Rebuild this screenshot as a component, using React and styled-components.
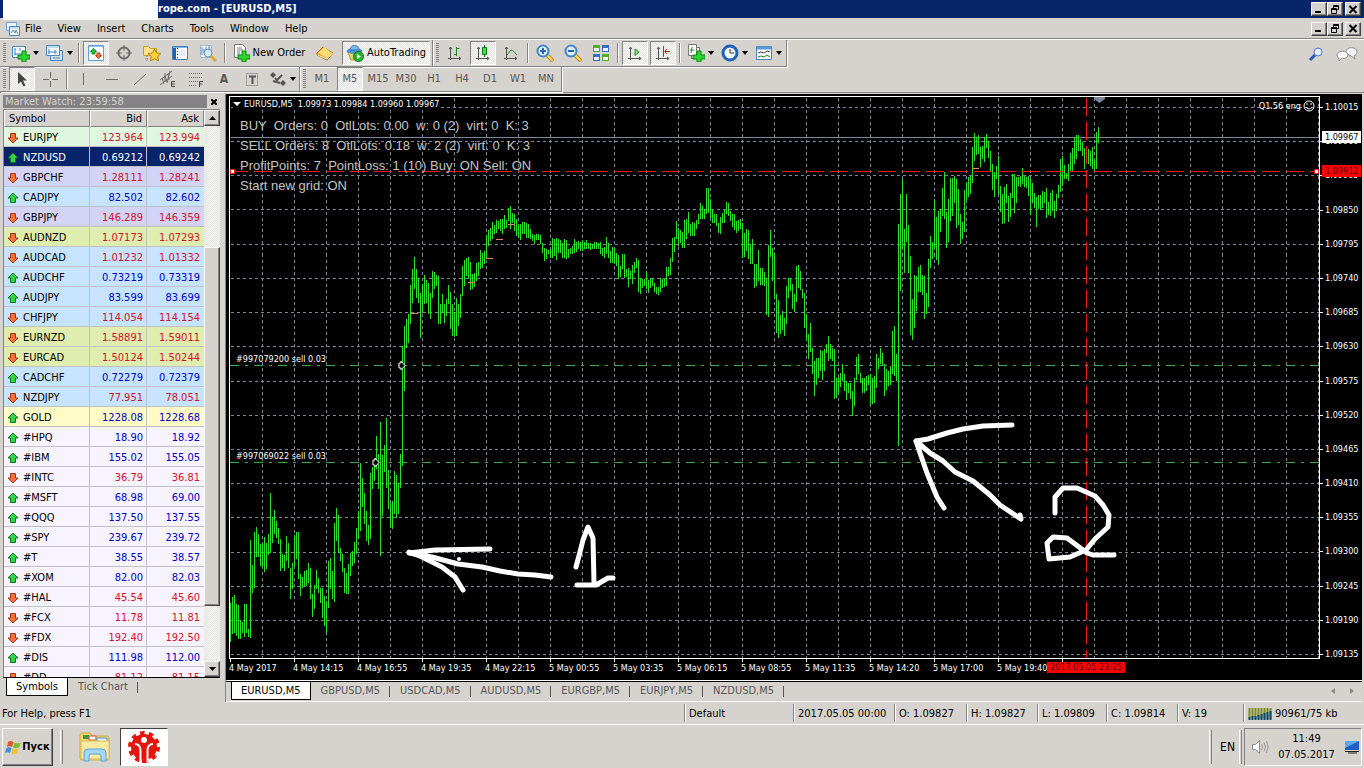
import React, { useState } from "react";
import styled, { createGlobalStyle, css } from "styled-components";

const UI_FONT = `Tahoma, "DejaVu Sans Condensed", "DejaVu Sans", sans-serif`;

const quotes = [
  ["EURJPY", "123.964", "123.994", "down", "#def7de"],
  ["NZDUSD", "0.69212", "0.69242", "up", "#08246b"],
  ["GBPCHF", "1.28111", "1.28241", "down", "#d3d3f5"],
  ["CADJPY", "82.502", "82.602", "up", "#c6e3ff"],
  ["GBPJPY", "146.289", "146.359", "down", "#d3d3f5"],
  ["AUDNZD", "1.07173", "1.07293", "down", "#dfedae"],
  ["AUDCAD", "1.01232", "1.01332", "down", "#c6e3ff"],
  ["AUDCHF", "0.73219", "0.73319", "up", "#c6e3ff"],
  ["AUDJPY", "83.599", "83.699", "up", "#c6e3ff"],
  ["CHFJPY", "114.054", "114.154", "down", "#c6e3ff"],
  ["EURNZD", "1.58891", "1.59011", "down", "#dfedae"],
  ["EURCAD", "1.50124", "1.50244", "down", "#dfedae"],
  ["CADCHF", "0.72279", "0.72379", "up", "#c6e3ff"],
  ["NZDJPY", "77.951", "78.051", "down", "#c6e3ff"],
  ["GOLD", "1228.08", "1228.68", "up", "#fffbc6"],
  ["#HPQ", "18.90", "18.92", "up"],
  ["#IBM", "155.02", "155.05", "up"],
  ["#INTC", "36.79", "36.81", "down"],
  ["#MSFT", "68.98", "69.00", "up"],
  ["#QQQ", "137.50", "137.55", "up"],
  ["#SPY", "239.67", "239.72", "up"],
  ["#T", "38.55", "38.57", "up"],
  ["#XOM", "82.00", "82.03", "up"],
  ["#HAL", "45.54", "45.60", "down"],
  ["#FCX", "11.78", "11.81", "down"],
  ["#FDX", "192.40", "192.50", "down"],
  ["#DIS", "111.98", "112.00", "up"],
  ["#DD", "81.12", "81.15", "down"],
];

const prices = [
  "1.10015", "1.09960", "1.09905", "1.09850", "1.09795", "1.09740",
  "1.09685", "1.09630", "1.09575", "1.09520", "1.09465", "1.09410",
  "1.09355", "1.09300", "1.09245", "1.09190", "1.09135",
];

const times = [
  "4 May 2017", "4 May 14:15", "4 May 16:55", "4 May 19:35", "4 May 22:15",
  "5 May 00:55", "5 May 03:35", "5 May 06:15", "5 May 08:55", "5 May 11:35",
  "5 May 14:20", "5 May 17:00", "5 May 19:40",
];

const gridRows = [
  107, 141, 175, 209, 244, 278, 312, 346, 381, 415, 449, 483, 517, 552, 586,
  620, 654,
];
const gridCols = Array.from({ length: 34 }, (_, i) => 262 + i * 32);

// high-low of every bar, 2px apart
const bars = `
602-641 596-633 594-632 603-635 604-638 619-638 621-632 603-636 603-632 628-636
539-637 564-592 531-587 526-556 533-556 543-565 542-566 536-571 542-568 533-554
492-552 516-542 509-533 520-537 527-543 538-570 553-567 554-570 535-560 542-567
567-598 562-588 534-565 531-558 531-578 573-595 576-587 570-585 569-585 562-582
567-598 593-616 584-608 569-588 577-592 587-602 587-617 595-625 600-632 560-607
557-588 570-598 522-601 507-540 514-552 547-560 553-571 567-592 572-593 563-593
552-575 550-565 541-562 527-553 510-538 462-530 477-506 492-523 510-540 524-544
472-538 466-488 465-480 435-468 453-488 421-555 454-515 444-471 417-487 469-508
502-527 500-528 470-513 474-517 482-513 453-487 345-465 325-390 318-347 313-342
284-323 268-302 256-288 268-297 277-302 292-337 283-312 274-303 279-302 282-313
292-318 270-297 271-288 274-285 275-323 303-323 293-312 303-322 298-315 284-303
291-328 303-335 312-336 297-335 303-325 293-317 265-295 259-285 257-275 256-278
261-289 273-288 272-286 262-280 261-275 249-268 252-267 250-263 234-258 229-245
227-240 221-238 224-233 219-232 220-228 218-230 218-233 214-228 219-227 207-220
205-228 212-222 213-230 218-235 223-237 223-239 221-233 221-233 222-237 223-237
228-238 233-240 234-243 233-239 233-239 234-243 242-252 247-260 248-258 249-253
248-257 237-257 238-255 237-259 238-252 239-252 242-257 238-257 239-258 248-257
247-253 245-253 238-252 241-251 240-248 241-250 239-250 241-248 239-248 242-248
242-249 243-248 241-248 241-248 242-248 241-253 247-255 246-257 236-253 242-257
250-262 246-262 247-263 252-265 254-278 265-276 253-268 253-277 268-276 267-286
270-278 264-283 261-272 257-267 259-291 277-293 278-287 278-285 270-288 279-292
277-287 277-285 282-291 286-293 286-294 277-291 278-287 278-286 266-285 266-275
257-274 237-261 236-251 220-238 227-245 229-242 231-247 219-247 218-238 211-232
223-235 221-235 222-235 219-228 213-223 202-218 205-218 208-218 187-213 187-212
198-217 209-222 213-222 213-225 222-232 216-233 212-222 209-222 201-213 202-215
210-220 213-226 213-229 220-232 219-230 218-228 222-257 232-256 228-250 229-258
243-263 238-263 263-287 263-285 249-280 267-284 267-284 271-285 277-314 244-316
229-256 247-280 252-297 293-332 299-337 314-333 310-329 317-335 285-323 277-297
277-290 283-308 293-311 265-301 264-287 270-289 288-297 292-327 313-340 333-358
322-351 347-373 360-395 357-384 357-377 349-370 350-379 348-370 343-352 335-360
343-358 347-360 348-398 377-397 376-392 372-386 363-380 373-390 380-399 382-392
382-398 390-415 377-405 356-379 353-373 372-382 377-392 377-392 375-390 374-384
373-404 377-403 375-402 353-387 357-368 347-363 352-365 363-395 368-389 370-385
365-384 330-373 325-375 353-380 223-445 193-290 178-248 228-272 193-241 224-272
255-334 298-339 274-327 275-310 266-291 264-291 274-294 275-318 292-313 258-306
235-267 241-258 198-248 216-259 210-264 208-231 187-215 171-218 211-247 198-241
177-220 177-215 175-202 178-227 188-224 213-243 221-238 189-231 181-200 176-196
175-193 146-182 132-160 136-154 134-153 146-166 145-158 136-161 133-147 140-157
150-170 163-189 171-196 165-178 155-193 185-211 193-223 186-222 183-202 195-221
192-216 173-197 173-212 176-202 176-185 175-186 167-183 175-186 176-187 175-195
178-214 182-202 192-207 196-226 194-208 194-209 190-207 191-202 187-217 201-214
192-215 189-210 200-217 193-210 184-197 158-191 155-185 164-178 172-178 163-180
152-170 147-171 136-163 134-158 134-150 138-150 141-155 147-168 145-162 148-163
150-165 146-168 158-170 131-168 126-142`;

const barPath = bars
  .trim()
  .split(/\s+/)
  .map((bar, i) => {
    const [high, low] = bar.split("-");
    return `M${230 + i * 2} ${high}V${low}`;
  })
  .join("");

const chartTabs = [
  "EURUSD,M5", "GBPUSD,M5", "USDCAD,M5", "AUDUSD,M5", "EURGBP,M5",
  "EURJPY,M5", "NZDUSD,M5",
];

const periods = ["M1", "M5", "M15", "M30", "H1", "H4", "D1", "W1", "MN"];

/////// icons

const Svg = ({ w = 18, h = 18, children }) => (
  <svg width={w} height={h} viewBox={`0 0 ${w} ${h}`} fill="none" aria-hidden="true">
    {children}
  </svg>
);

const Plus = () => (
  <path d="M10 7h4v4h4v4h-4v3h-4v-3H6v-4h4z" fill="#2fd42f" stroke="#078a0b" />
);

const NewChartIcon = () => (
  <Svg>
    <path d="M.5 2.500h13v11H.5z" fill="#f4faff" stroke="#4a86b8" />
    <path d="M3 5v6M2 5h2M2 10h8M8 4v3" stroke="#4a86b8" />
    <Plus />
  </Svg>
);
const ProfilesIcon = () => (
  <Svg>
    <path d="M4.500 6.500h12v10h-12z" fill="#cfe2f3" stroke="#4a86b8" />
    <path d="M.5 1.500h13v10H.5z" fill="#f4faff" stroke="#4a86b8" />
    <path d="M1 3h12" stroke="#8fbfe6" />
    <path d="M3 5v5M2 8h9M9 6v4M7 14h7" stroke="#4a86b8" />
  </Svg>
);
const WatchIcon = () => (
  <Svg>
    <path d="M1.500 1.500h15v15h-15z" fill="#fff" stroke="#5aa0d8" />
    <path d="M2 2.500h14" stroke="#8fc4ec" />
    <path d="M3.500 7.500 6.500 4.500 9.500 7.500H8V10H5V7.500z" fill="#35c045" stroke="#128a1c" />
    <path d="M8.500 11.500 11.500 14.500l3-3h-1.500V9h-3v2.500z" fill="#f08040" stroke="#b03010" />
  </Svg>
);
const TargetIcon = () => (
  <Svg>
    <circle cx="9" cy="9" r="5.500" stroke="#6b6b6b" strokeWidth="2" />
    <path d="M9 1v6M9 11v6M1 9h6M11 9h6" stroke="#6b6b6b" />
  </Svg>
);
const FavIcon = () => (
  <Svg>
    <path d="M.5 2.500h5l2 2h6v7H.5z" fill="#ffe28a" stroke="#c99b2a" />
    <path d="M4 12v5M2 15h4" stroke="#9a7a30" strokeDasharray="1 1" />
    <path d="m11.500 5 2 4 4.500.5-3.300 3 .9 4.500-4.100-2.200L7.400 17l.9-4.500-3.300-3L9.500 9z" fill="#ffd23c" stroke="#b98509" />
  </Svg>
);
const NavIcon = () => (
  <Svg>
    <path d="M1.500 2.500h15v13h-15z" fill="#fff" stroke="#3a7cc0" />
    <path d="M2 3.500h14" stroke="#7fb4e4" />
    <path d="M3.500 4v11" stroke="#2a5fa8" strokeWidth="3" />
    <path d="M6.500 4v11" stroke="#222" strokeDasharray="1 2" />
    <path d="M8 7h7M8 9h7M8 11h7" stroke="#c8dff5" />
  </Svg>
);
const TesterIcon = () => (
  <Svg>
    <path d="M1.500 1.500h11v12h-11z" fill="#fff" stroke="#9bb5cc" />
    <path d="M3 3v8M5 5v4M7 3v5M10 2v5" stroke="#3d7ab8" />
    <circle cx="9" cy="9" r="4" fill="#cfe6fa" fillOpacity=".8" stroke="#5d93c4" />
    <path d="m12 12 5 5" stroke="#e0a92c" strokeWidth="3" />
  </Svg>
);
const OrderIcon = () => (
  <Svg>
    <path d="M2.500.5h8l3 3v10h-11z" fill="#fff" stroke="#777" />
    <path d="M5 4h5M5 6h6M5 8h3M5 10h3" stroke="#777" />
    <Plus />
  </Svg>
);
const BookIcon = () => (
  <Svg>
    <path d="M1 9 7 3l10 6-6 7L1 11z" fill="#e8a32c" stroke="#a86f10" />
    <path d="m2 9 6-6 8 6-5 5z" fill="#ffdb74" />
    <path d="m1.500 11 9.500 4 5.500-6" stroke="#fff3cf" />
  </Svg>
);
const ExpertIcon = () => (
  <Svg>
    <path d="M2 8h13l-3 8H5z" fill="#f0d060" stroke="#b9962c" />
    <ellipse cx="8.500" cy="7" rx="8" ry="3" fill="#4a90d0" />
    <path d="M4 6c0-6 9-6 9 0z" fill="#79b9ec" stroke="#3d7ab8" />
    <circle cx="12.500" cy="12.500" r="5" fill="#27b32b" stroke="#0c7a12" />
    <path d="m11 10 4 2.500-4 2.500z" fill="#fff" />
  </Svg>
);
const Axes = () => (
  <path d="M4.500 3v13M2 14.500h13M3 5l1.500-2L6 5M13 13l2 1.500-2 1.500" stroke="#555" />
);
const BarsIcon = () => (
  <Svg><Axes /><path d="M10.500 3v9M8 10.500h2M10.500 4.500h3" stroke="#178a1e" /></Svg>
);
const CandleIcon = () => (
  <Svg>
    <Axes />
    <path d="M10.500 1v12" stroke="#0a7a10" />
    <path d="M8.500 3.500h4v7h-4z" fill="#3fe048" stroke="#0a7a10" />
  </Svg>
);
const LineIcon = () => (
  <Svg><Axes /><path d="m5 11 4-5c2 0 3 2 6 5" stroke="#178a1e" /></Svg>
);
const Magnifier = ({ plus }) => (
  <Svg>
    <path d="m11 11 6 6" stroke="#b58a20" strokeWidth="4" />
    <path d="m11 11 5.500 5.500" stroke="#ffd75c" strokeWidth="2" />
    <circle cx="7" cy="7" r="5.500" fill="#dff1ff" stroke="#3f86c8" strokeWidth="2" />
    <path d={plus ? "M4 7h6M7 4v6" : "M4 7h6"} stroke="#2468b0" strokeWidth="2" />
  </Svg>
);
const TileIcon = () => (
  <Svg>
    <path d="M1 1h7v7H1zM10 10h7v7h-7z" fill="#5aa82c" />
    <path d="M10 1h7v7h-7zM1 10h7v7H1z" fill="#2f6fc8" />
    <path d="M2 4h5v3H2zM11 4h5v3h-5zM2 13h5v3H2zM11 13h5v3h-5z" fill="#f2f8ff" />
  </Svg>
);
const ScrollIcon = () => (
  <Svg><Axes /><path d="m9 5 4 3-4 3.500z" fill="#8fe394" stroke="#178a1e" /></Svg>
);
const ShiftIcon = () => (
  <Svg><Axes /><path d="M9.500 2v11" stroke="#555" /><path d="M16 7.500h-5M13 5l-2.500 2.500L13 10" stroke="#b0281c" /></Svg>
);
const IndicatorIcon = () => (
  <Svg>
    <path d="M4.500 3.500h8v11h-8z" fill="#fff" stroke="#777" />
    <path d="M1.500.5h8v11h-8z" fill="#fff" stroke="#777" />
    <path d="M6 3c-2 0-1 3-2 6M3 6h4" stroke="#178a1e" />
    <Plus />
  </Svg>
);
const ClockIcon = () => (
  <Svg>
    <circle cx="9" cy="9" r="7" fill="#eef6ff" stroke="#1e62b8" strokeWidth="3" />
    <path d="M9 5v4h4" stroke="#333" />
  </Svg>
);
const TemplateIcon = () => (
  <Svg>
    <path d="M1.500 2.500h15v13h-15z" fill="#fff" stroke="#4a86b8" />
    <path d="M2 4h14" stroke="#5a9ad8" strokeWidth="3" />
    <path d="m3 9 3-1 3 1 3-2 3 1" stroke="#444" />
    <path d="m3 13 3-1 3 1 3-2 3 2" stroke="#178a1e" />
  </Svg>
);
const CursorIcon = () => (
  <Svg><path d="M5 2v12l3-2.500 2.500 5 2-1-2.500-5h4z" fill="#444" /></Svg>
);
const stroke = "#6b6b6b";
const CrossIcon = () => (
  <Svg><path d="M9.500 2v6M9.500 11v6M2 9.500h6M11 9.500h6" stroke={stroke} /></Svg>
);
const VLineIcon = () => <Svg><path d="M8.500 3v12" stroke={stroke} /></Svg>;
const HLineIcon = () => <Svg><path d="M3 9.500h12" stroke={stroke} /></Svg>;
const TrendIcon = () => <Svg><path d="M3 15 15 4" stroke={stroke} /></Svg>;
const ChannelIcon = () => (
  <Svg>
    <path d="M1 10 13 1M1 15 13 6M3 8l2 6M6 6l2 6M9 4l1 6M6 3v9M11 1l-3 12" stroke={stroke} />
    <path d="M16 11.500h-3.500v5H16M13 14h3" stroke="#444" />
  </Svg>
);
const FiboIcon = () => (
  <Svg>
    <path d="M2 3.500h13M2 7.500h13M2 11.500h9M2 15.500h8" stroke={stroke} strokeDasharray="1 1" />
    <path d="M12.500 17v-5.500H16M12 14h3.500" stroke="#444" />
  </Svg>
);
const LabelIcon = () => (
  <Svg>
    <path d="M3.500 3.500h11v12h-11z" stroke={stroke} strokeDasharray="1 1" />
    <path d="M6 6.500h7M9.500 6v8" stroke="#555" strokeWidth="2" />
  </Svg>
);
const ArrowsIcon = () => (
  <Svg>
    <path d="m1 5 3-3 3 3-3 3zM11 13l3-3 3 3-3 3z" fill="#555" />
    <path d="m6 8 2 2 5-5M4 11l7 2" stroke="#555" strokeWidth="2" />
  </Svg>
);
const Caret = () => (
  <svg width="6" height="4" viewBox="0 0 6 4" aria-hidden="true"><path d="M0 0h6L3 4z" fill="#000" /></svg>
);
const Arrow = ({ dir }) => (
  <svg width="12" height="12" viewBox="0 0 12 12" aria-hidden="true">
    {dir === "up" ? (
      <path d="M6 1 11 6H8.500v4.500h-5V6H1z" fill="#35d148" stroke="#0b7a1c" />
    ) : (
      <path d="M6 11 1 6h2.500V1.500h5V6H11z" fill="#f4713c" stroke="#a8330c" />
    )}
  </svg>
);
const GlyphMin = () => <Svg w={10} h={9}><path d="M1 7h6" stroke="#000" strokeWidth="2" /></Svg>;
const GlyphRestore = () => (
  <Svg w={10} h={9}>
    <path d="M3.500 3V.5h5v4H7M3 1.500h6M1.500 3.500h5v5h-5zM1 4.500h6" stroke="#000" />
  </Svg>
);
const GlyphClose = () => (
  <Svg w={10} h={9}><path d="m1.500 1 7 7m0-7-7 7" stroke="#000" strokeWidth="2" /></Svg>
);

/////// parts

const Tool = ({ label, w, pressed, menu, children }) => (
  <ToolButton type="button" title={label} aria-label={label} aria-pressed={!!pressed} $w={w} $pressed={pressed}>
    {children}
    {menu && <Caret />}
  </ToolButton>
);

const WindowControls = ({ name }) => (
  <Controls>
    <WinButton type="button" aria-label={`Minimize ${name}`}><GlyphMin /></WinButton>
    <WinButton type="button" aria-label={`Restore ${name}`}><GlyphRestore /></WinButton>
    <WinButton type="button" aria-label={`Close ${name}`} $gap><GlyphClose /></WinButton>
  </Controls>
);

const MarketWatch = () => (
  <Watch>
    <WatchHead>
      <WatchTitle>Market Watch: 23:59:58</WatchTitle>
      <WatchClose type="button" aria-label="Close Market Watch">
        <svg width="6" height="6" viewBox="0 0 6 6"><path d="m0 0 6 6m0-6L0 6" stroke="#000" strokeWidth="2" /></svg>
      </WatchClose>
    </WatchHead>
    <WatchBody>
      <TableBox>
        <Table>
          <thead>
            <tr>
              <Th>Symbol</Th>
              <Th $num>Bid</Th>
              <Th $num>Ask</Th>
            </tr>
          </thead>
          <tbody>
            {quotes.map(([name, bid, ask, dir, bg]) => (
              <Row key={name} $bg={bg} $dir={dir} $selected={name === "NZDUSD"}>
                <td><SymbolCell><Arrow dir={dir} />{name}</SymbolCell></td>
                <td>{bid}</td>
                <td>{ask}</td>
              </Row>
            ))}
          </tbody>
        </Table>
      </TableBox>
      <ScrollBar>
        <ScrollButton type="button" aria-label="Scroll up">
          <svg width="7" height="4" viewBox="0 0 7 4"><path d="M0 4h7L3.500 0z" /></svg>
        </ScrollButton>
        <Track $grow={121} />
        <Thumb />
        <Track $grow={55} />
        <ScrollButton type="button" aria-label="Scroll down">
          <svg width="7" height="4" viewBox="0 0 7 4"><path d="M0 0h7L3.500 4z" /></svg>
        </ScrollButton>
      </ScrollBar>
    </WatchBody>
    <WatchTabs>
      <Tab type="button" $active>Symbols</Tab>
      <Tab type="button">Tick Chart</Tab>
    </WatchTabs>
  </Watch>
);

const PlotDrawing = () => (
  <PlotSvg viewBox="230 97 1089 561" preserveAspectRatio="none" role="img" aria-label="EURUSD M5 price chart">
    <g shapeRendering="crispEdges" fill="none" transform="translate(0.5 0.5)">
      <g stroke="#778899" strokeDasharray="3 3">
        {gridRows.map((y) => <path key={y} d={`M230 ${y}H1319`} />)}
        {gridCols.map((x) => <path key={x} d={`M${x} 97V658`} />)}
      </g>
      <path d="M230 137H1319" stroke="#778899" />
      <path d={barPath} stroke="#2be02b" />
      <path d="M410 313h7M467 282h7M485 258h7M495 239h7M507 224h7M971 168h7" stroke="#e08868" />
      <path d="M1086 97V658" stroke="#f01818" strokeDasharray="18 6" />
    </g>
    <g fill="none">
      <path d="M230 365.500H1319M230 462.500H1319" stroke="#32b03c" strokeDasharray="9 6 3 6" />
      <path d="M230 171.500H1319" stroke="#ff1414" strokeDasharray="18 6" />
      <path d="M230.500 169.500h4v4h-4zM1314.500 169.500h4v4h-4z" fill="#fff" stroke="#f01818" />
    </g>
    <path d="M1094 97h11v2l-5.500 4-5.500-4z" fill="#778899" />
    <path d="M399 363h2v-2l4 4.500-4 4.500v-2h-2zM373 460h2v-2l4 4.500-4 4.500v-2h-2z" fill="#000" stroke="#fff" />
    <g fill="none" stroke="#fff" strokeWidth="5" strokeLinecap="round" strokeLinejoin="round">
      <path d="M490 549 435 550 409 553 432 557 458 564 482 567 500 571 518 574 535 575 551 577" />
      <path d="M409 552 422 557 442 567 455 577 463 590" />
      <path d="M459 559v0" strokeWidth="4" />
      <path d="M576 567 580 552 583 540 588 527 593 538 594 583M577 585H596L608 578 613 578" />
      <path d="M1012 425 983 426 963 429 947 433 928 439 916 441 930 453 943 461 955 472 973 481 990 495 1000 505 1021 519 1020 515" />
      <path d="M916 441 920 453 927 473 937 497 944 508" />
      <path d="M1055 513V497L1063 488 1077 488 1095 496 1103 505 1109 515 1108 527 1095 539 1086 550 1070 557 1049 559 1047 543 1053 537 1067 538 1087 553 1093 555H1114" />
    </g>
  </PlotSvg>
);

const Chart = () => (
  <ChartWindow>
    <Plot>
      <PlotDrawing />
      <ChartTitle>
        <svg width="8" height="4" viewBox="0 0 8 4"><path d="M0 0h8L4 4z" fill="#fff" /></svg>
        {"EURUSD,M5  1.09973 1.09984 1.09960 1.09967"}
      </ChartTitle>
      <ExpertName>
        Q1.56 eng
        <Svg w={12} h={12}>
          <circle cx="6" cy="6" r="5" stroke="#fff" />
          <path d="M4 3v2M8 3v2M3 7c1 2.500 5 2.500 6 0" stroke="#fff" />
        </Svg>
      </ExpertName>
      <Comment>
        {`BUY  Orders: 0  OtlLots: 0.00  w: 0 (2)  virt: 0  K: 3
SELL Orders: 8  OtlLots: 0.18  w: 2 (2)  virt: 0  K: 3
ProfitPoints: 7  PointLoss: 1 (10) Buy: ON Sell: ON
Start new grid: ON`}
      </Comment>
      <OrderLabel $top={257}>#997079200 sell 0.03</OrderLabel>
      <OrderLabel $top={354}>#997069022 sell 0.03</OrderLabel>
    </Plot>
    <PriceAxis>
      {prices.map((p) => <PriceLabel key={p}>{p}</PriceLabel>)}
      <PriceTag $top={35}>1.09967</PriceTag>
      <PriceTag $top={69} $red>1.09912</PriceTag>
    </PriceAxis>
    <TimeAxis>
      {times.map((t) => <TimeLabel key={t}>{t}</TimeLabel>)}
      <TimeLabel />
      <TimeTag>2017.05.05 23:25</TimeTag>
    </TimeAxis>
  </ChartWindow>
);

const App = () => {
  const [tab, setTab] = useState("EURUSD,M5");

  return (
    <Desktop>
      <GlobalStyle />
      <TitleBar>
        <TitlePatch />
        <Title>rope.com - [EURUSD,M5]</Title>
        <WindowControls name="terminal" />
      </TitleBar>
      <MenuBar>
        <Svg w={16} h={16}>
          <path d="M1.500 1.500h10v8h-10z" fill="#eef6ff" stroke="#6d9fce" />
          <path d="M4.500 5.500h10v9h-10z" fill="#fff" stroke="#4a86b8" />
          <path d="M5 7h9" stroke="#8fbfe6" />
          <path d="m6 12 2-3 2 3 1-3 2 4" stroke="#4a86b8" />
        </Svg>
        <Menu>
          {["File", "View", "Insert", "Charts", "Tools", "Window", "Help"].map((m) => (
            <MenuItem key={m} type="button">{m}</MenuItem>
          ))}
        </Menu>
        <WindowControls name="chart" />
      </MenuBar>

      <ToolRow>
        <ToolGroup>
          <Grip />
          <Tool label="New Chart" w={34} menu><NewChartIcon /></Tool>
          <Tool label="Profiles" w={34} menu><ProfilesIcon /></Tool>
          <Divider />
          <Tool label="Market Watch" pressed><WatchIcon /></Tool>
          <Tool label="Data Window"><TargetIcon /></Tool>
          <Tool label="Navigator"><FavIcon /></Tool>
          <Tool label="Terminal"><NavIcon /></Tool>
          <Tool label="Strategy Tester"><TesterIcon /></Tool>
          <Divider />
          <Tool label="New Order" w={81}><OrderIcon />New Order</Tool>
          <Tool label="MetaEditor" w={32}><BookIcon /></Tool>
          <Tool label="AutoTrading" w={90} pressed><ExpertIcon />AutoTrading</Tool>
        </ToolGroup>
        <ToolGroup>
          <Grip />
          <Tool label="Bar Chart"><BarsIcon /></Tool>
          <Tool label="Candlesticks" pressed><CandleIcon /></Tool>
          <Tool label="Line Chart"><LineIcon /></Tool>
          <Divider />
          <Tool label="Zoom In"><Magnifier plus /></Tool>
          <Tool label="Zoom Out"><Magnifier /></Tool>
          <Tool label="Tile Windows"><TileIcon /></Tool>
          <Divider />
          <Tool label="Auto Scroll" pressed><ScrollIcon /></Tool>
          <Tool label="Chart Shift" pressed><ShiftIcon /></Tool>
          <Divider />
          <Tool label="Indicators" w={34} menu><IndicatorIcon /></Tool>
          <Tool label="Periods" w={34} menu><ClockIcon /></Tool>
          <Tool label="Templates" w={34} menu><TemplateIcon /></Tool>
        </ToolGroup>
        <ToolEnd>
          <Tool label="Search">
            <Svg w={16} h={16}>
              <path d="m2 14 5-5" stroke="#2b55c0" strokeWidth="3" />
              <circle cx="10" cy="6" r="4" fill="#e6f1fb" stroke="#4a74c8" />
            </Svg>
          </Tool>
          <Tool label="Chat" w={34}>
            <Svg w={22} h={16}>
              <path d="M10 7c-1-7 11-7 11-1 0 3-2 3-3 4l1 3-4-3z" fill="#f4f4f4" stroke="#8a8a8a" />
              <path d="M1 9c0-5 11-5 11 0 0 3-4 4-6 3l-3 3v-3c-1 0-2-1-2-3z" fill="#fff" stroke="#8a8a8a" />
            </Svg>
          </Tool>
        </ToolEnd>
      </ToolRow>
      <ToolRow $last>
        <ToolGroup $muted>
          <Grip />
          <Tool label="Cursor" pressed><CursorIcon /></Tool>
          <Tool label="Crosshair"><CrossIcon /></Tool>
          <Divider />
          <Tool label="Vertical Line"><VLineIcon /></Tool>
          <Tool label="Horizontal Line"><HLineIcon /></Tool>
          <Tool label="Trendline"><TrendIcon /></Tool>
          <Tool label="Equidistant Channel"><ChannelIcon /></Tool>
          <Tool label="Fibonacci"><FiboIcon /></Tool>
          <Tool label="Text"><Bold>A</Bold></Tool>
          <Tool label="Text Label"><LabelIcon /></Tool>
          <Tool label="Arrows" w={32} menu><ArrowsIcon /></Tool>
        </ToolGroup>
        <ToolGroup $muted>
          <Grip />
          {periods.map((p) => <Tool key={p} label={p} pressed={p === "M5"}>{p}</Tool>)}
        </ToolGroup>
      </ToolRow>

      <Main>
        <MarketWatch />
        <ChartPane>
          <Chart />
          <ChartTabs>
            {chartTabs.map((t) => (
              <Tab key={t} type="button" $active={t === tab} onClick={() => setTab(t)}>{t}</Tab>
            ))}
            <TabScroll>
              <svg width="4" height="6" viewBox="0 0 4 6"><path d="M4 0v6L0 3z" fill="#8c8a86" /></svg>
              <svg width="4" height="6" viewBox="0 0 4 6"><path d="M0 0v6l4-3z" fill="#8c8a86" /></svg>
            </TabScroll>
          </ChartTabs>
        </ChartPane>
      </Main>

      <StatusBar>
        <Help>For Help, press F1</Help>
        <Cell $w={109}>Default</Cell>
        <Cell $w={101}>2017.05.05 00:00</Cell>
        <Cell $w={72}>O: 1.09827</Cell>
        <Cell $w={71}>H: 1.09827</Cell>
        <Cell $w={69}>L: 1.09809</Cell>
        <Cell $w={71}>C: 1.09814</Cell>
        <Cell $w={66}>V: 19</Cell>
        <Cell $w={121}>
          <Svg w={24} h={14}>
            <path d="M1.500 1v11M4.500 1v11M7.500 1v11M10.500 1v11M13.500 1v11M16.500 1v11M19.500 1v11M22.500 1v11" stroke="#7a8a1c" strokeWidth="2" />
            <path d="M1.500 10v3M4.500 9v4M7.500 9v4M10.500 8v5M13.500 7v6M16.500 6v7M19.500 5v8M22.500 4v9" stroke="#0c4a78" strokeWidth="2" />
          </Svg>
          90961/75 kb
        </Cell>
      </StatusBar>

      <TaskBar>
        <StartButton type="button">
          <Svg w={17} h={16}>
            <path d="M3 3c2-1.500 4-1 5.500 0L7 8C5.500 7 3.500 7 2 8z" fill="#e8562a" />
            <path d="M9.500 3.500c2 1 4 1 6.500 0l-2 5c-2 1-4 1-6 0z" fill="#7bbf2e" />
            <path d="M1.500 9c2-1 3.500-1 5 0l-1.500 5c-1.500-1-3-1-5 0z" fill="#3f8fe0" />
            <path d="M7.500 9.500c2 1 4 1 6 0l-1.500 5c-2 1-4 1-6 0z" fill="#f6c22c" />
          </Svg>
          Пуск
        </StartButton>
        <TaskDivider />
        <TaskIcon type="button" aria-label="Explorer">
          <Svg w={34} h={32}>
            <path d="M2 4q0-2 2-2h8l2 3h15q2 0 2 2v21q0 1-1 1H4q-2 0-2-2z" fill="#f3d777" stroke="#d0ab48" />
            <path d="M5 4h6v4H5z" fill="#3f9a3c" />
            <path d="M11 5h7v4h-7z" fill="#fff" stroke="#c94f32" />
            <path d="M19 7h10v4H19z" fill="#eaf5fd" stroke="#4d94cf" />
            <path d="M3 10h28v18H3z" fill="#fae9a0" stroke="#ddbb5a" />
            <path d="M6 30v-8q0-4 4-4h14q4 0 4 4v8h-5v-5q0-2-2-2h-8q-2 0-2 2v5z" fill="#a4d6f5" stroke="#5aa4d6" />
          </Svg>
        </TaskIcon>
        <TaskIcon type="button" aria-label="MetaTrader" $active>
          <Svg w={34} h={34}>
            <circle cx="17" cy="17" r="14" stroke="#e3150c" strokeWidth="4" strokeDasharray="4.500 4.300" />
            <circle cx="17" cy="17" r="13" fill="#e3150c" />
            <circle cx="17" cy="10" r="3" fill="#fff" />
            <path d="M8 14q5 0 5.500 6v12M26 14q-5 0-5.500 6v12" stroke="#fff" strokeWidth="2" />
            <path d="M17 17v16" stroke="#e3150c" strokeWidth="4" />
          </Svg>
        </TaskIcon>
        <TaskSpace />
        <TaskDivider $tight />
        <Lang>EN</Lang>
        <TaskDivider $tight />
        <Tray>
          <Svg w={18} h={18}>
            <path d="M1.500 6.500h3l4-4v13l-4-4h-3z" fill="#fff" stroke="#8a8a8a" />
            <path d="M10.500 6q2 3 0 6M13 4.500q3 4.500 0 9M15.500 3q3 6 0 12" stroke="#9c9c9c" />
          </Svg>
          <Clock>
            <span>11:49</span>
            <span>07.05.2017</span>
          </Clock>
          <Svg w={16} h={14}>
            <path d="M1 1h14v9H1z" fill="#1f5fc4" />
            <path d="M1 1h14L1 8z" fill="#5fa8f0" />
            <path d="M1 11.500h14M4 13h9" stroke="#222" />
          </Svg>
        </Tray>
      </TaskBar>
    </Desktop>
  );
};
export default App;

const GlobalStyle = createGlobalStyle`
  * {
    box-sizing: border-box;
  }
  body {
    margin: 0;
    background: #d6d3ce;
    font-family: ${UI_FONT};
    font-size: 11px;
    line-height: 14px;
    color: #000;
  }
  button {
    font: inherit;
    color: inherit;
    padding: 0;
    margin: 0;
    border: 0;
    background: none;
  }
  svg {
    flex: none;
    display: block;
  }
`;

const dither = css`
  background: repeating-conic-gradient(#fff 0% 25%, #e2e0dc 0% 50%) 0 0 / 2px 2px;
`;

const raised = css`
  background: #d6d3ce;
  border: 1px solid;
  border-color: #fff #424142 #424142 #fff;
  box-shadow: inset -1px -1px 0 #848284;
`;

const Desktop = styled.div`
  height: 100vh;
  display: flex;
  flex-direction: column;
  overflow: hidden;
  white-space: nowrap;
`;

const TitleBar = styled.header`
  flex: none;
  height: 18px;
  display: flex;
  align-items: center;
  background: #08246b;
  color: #fff;
  padding: 0 3px;
`;

const TitlePatch = styled.div`
  align-self: flex-start;
  width: 155px;
  height: 20px;
  background: #fff;
  z-index: 1;
`;

const Title = styled.h1`
  flex: 1;
  margin: 0;
  font-size: 11px;
  line-height: 16px;
  font-weight: bold;
`;

const Controls = styled.div`
  display: flex;
`;

const WinButton = styled.button`
  ${raised}
  width: 16px;
  height: 14px;
  display: flex;
  justify-content: center;
  align-items: center;
  margin-left: ${(props) => (props.$gap ? "2px" : "0")};
`;

const MenuBar = styled.nav`
  flex: none;
  height: 22px;
  display: flex;
  align-items: center;
  padding: 0 3px 0 5px;
  border-bottom: 1px solid #fff;
  box-shadow: inset 0 -1px 0 #848284;
`;

const Menu = styled.div`
  flex: 1;
  display: flex;
  gap: 16px;
  padding-left: 4px;
`;

const MenuItem = styled.button``;

///////

const ToolRow = styled.div`
  flex: none;
  height: ${(props) => (props.$last ? "26px" : "27px")};
  display: flex;
  ${(props) => props.$last && "border-bottom: 1px solid #848284;"}
`;

const ToolGroup = styled.div`
  display: flex;
  align-items: center;
  color: ${(props) => (props.$muted ? "#555" : "#000")};
  border-right: 1px solid #848284;
  border-bottom: 1px solid #848284;
  box-shadow: 1px 1px 0 #fff;
  padding-right: 1px;
`;

const Grip = styled.span`
  width: 3px;
  height: 20px;
  margin: 0 2px 0 3px;
  background: repeating-linear-gradient(#848284 0 1px, #d6d3ce 1px 2px);
`;

const Divider = styled.span`
  width: 2px;
  height: 20px;
  margin: 0 2px;
  border-left: 1px solid #848284;
  border-right: 1px solid #fff;
`;

const ToolButton = styled.button`
  width: ${(props) => (props.$w || 28) - 2}px;
  height: 24px;
  margin: 0 1px;
  display: flex;
  justify-content: center;
  align-items: center;
  gap: 3px;
  border: 1px solid transparent;
  ${(props) =>
    props.$pressed &&
    css`
      ${dither}
      border-color: #848284 #fff #fff #848284;
    `}
`;

const Bold = styled.b`
  font-size: 12px;
`;

const ToolEnd = styled.div`
  flex: 1;
  display: flex;
  justify-content: flex-end;
  align-items: center;
`;

///////

const Main = styled.main`
  flex: 1;
  min-height: 0;
  display: flex;
  padding-top: 1px;
`;

const Watch = styled.section`
  flex: none;
  width: 226px;
  display: flex;
  flex-direction: column;
  padding: 1px 5px 6px 3px;
  border-right: 1px solid #848284;
`;

const WatchHead = styled.div`
  display: flex;
  height: 13px;
`;

const WatchTitle = styled.h2`
  flex: 1;
  margin: 0;
  padding-left: 2px;
  font-size: 11px;
  line-height: 13px;
  font-weight: normal;
  color: #d6d3ce;
  background: #848284;
`;

const WatchClose = styled.button`
  width: 12px;
  margin-left: 1px;
  display: flex;
  justify-content: center;
  align-items: center;
`;

const WatchBody = styled.div`
  flex: 1;
  min-height: 0;
  display: flex;
  margin-top: 1px;
  border: 1px solid #848284;
  border-right: 0;
  border-bottom-color: #000;
`;

const TableBox = styled.div`
  flex: 1;
  overflow: hidden;
`;

const Table = styled.table`
  width: 100%;
  border-collapse: separate;
  border-spacing: 0;
  table-layout: fixed;
`;

const Th = styled.th`
  width: ${(props) => (props.$num ? "57px" : "auto")};
  height: 17px;
  padding: 1px 4px 0;
  font-weight: normal;
  line-height: 14px;
  text-align: ${(props) => (props.$num ? "right" : "left")};
  border: 1px solid;
  border-color: #fff #848284 #848284 #fff;
`;

const Row = styled.tr`
  background: ${(props) => props.$bg || "#f7f3ff"};

  td {
    height: 20px;
    padding: 2px 3px 0;
    text-align: right;
    line-height: 14px;
    border-right: 1px solid #c0c0c8;
    border-bottom: 1px solid #c0c0c8;
    color: ${(props) => (props.$selected ? "#fff" : props.$dir === "up" ? "#0000c8" : "#d6102a")};
  }
  td:first-child {
    color: ${(props) => (props.$selected ? "#fff" : "#000")};
  }
  td:last-child {
    border-right: 0;
    padding-right: 4px;
  }
`;

const SymbolCell = styled.span`
  display: flex;
  align-items: center;
  gap: 4px;
`;

const ScrollBar = styled.div`
  width: 16px;
  display: flex;
  flex-direction: column;
`;

const ScrollButton = styled.button`
  ${raised}
  height: 16px;
  display: flex;
  justify-content: center;
  align-items: center;
`;

const Track = styled.div`
  ${dither}
  flex: ${(props) => props.$grow};
`;

const Thumb = styled.div`
  ${raised}
  flex: 359;
`;

const WatchTabs = styled.div`
  display: flex;
  height: 18px;
  padding-left: 3px;
`;

const Tab = styled.button`
  height: 18px;
  padding: 0 10px;
  color: #555;
  position: relative;

  &::after {
    content: "";
    position: absolute;
    right: 0;
    top: 4px;
    height: 11px;
    border-right: 1px solid #555;
  }
  ${(props) =>
    props.$active &&
    css`
      padding: 0 9px;
      color: #000;
      background: #fff;
      border: 1px solid #000;
      border-top: 0;
      &::after {
        display: none;
      }
    `}
`;

///////

const ChartPane = styled.section`
  flex: 1;
  min-width: 0;
  display: flex;
  flex-direction: column;
  padding-right: 2px;
`;

const ChartWindow = styled.div`
  flex: 1;
  min-height: 0;
  display: grid;
  grid-template-columns: 1fr 42px;
  grid-template-rows: 1fr 21px;
  padding: 2px 0 0 3px;
  background: #000;
  color: #fff;
  font-size: 9px;
  line-height: 10px;
`;

const Plot = styled.div`
  position: relative;
  border: 1px solid #fff;
  overflow: hidden;
`;

const PlotSvg = styled.svg`
  position: absolute;
  inset: 0;
  width: 100%;
  height: 100%;
`;

const ChartTitle = styled.div`
  position: absolute;
  top: 2px;
  left: 3px;
  display: flex;
  align-items: center;
  gap: 3px;
  white-space: pre;
  background: #000;
`;

const ExpertName = styled.div`
  position: absolute;
  top: 3px;
  right: 4px;
  display: flex;
  align-items: center;
  gap: 2px;
`;

const Comment = styled.pre`
  position: absolute;
  top: 19px;
  left: 10px;
  margin: 0;
  font-family: Arial, "Liberation Sans", sans-serif;
  font-size: 13px;
  line-height: 20px;
  color: #c4c4c4;
`;

const OrderLabel = styled.div`
  position: absolute;
  top: ${(props) => props.$top}px;
  left: 6px;
`;

const PriceAxis = styled.div`
  position: relative;
  display: flex;
  flex-direction: column;
  justify-content: space-between;
  padding-top: 6px;
`;

const PriceLabel = styled.span`
  padding-left: 5px;
  background: linear-gradient(#fff, #fff) 0 5px / 3px 1px no-repeat;
`;

const PriceTag = styled.span`
  position: absolute;
  top: ${(props) => props.$top}px;
  left: 2px;
  right: 1px;
  padding-left: 3px;
  line-height: 12px;
  color: ${(props) => (props.$red ? "#500" : "#000")};
  background: ${(props) => (props.$red ? "#f00" : "#fff")};
`;

const TimeAxis = styled.div`
  position: relative;
  display: grid;
  grid-template-columns: repeat(17, 1fr);
  margin-right: 3px;
`;

const TimeLabel = styled.span`
  padding-top: 4px;
  min-width: 0;
  background: linear-gradient(#fff, #fff) 1px 0 / 1px 3px no-repeat;
`;

const TimeTag = styled.span`
  position: absolute;
  left: 75%;
  top: 3px;
  margin-left: 2px;
  padding: 0 3px;
  line-height: 11px;
  color: #500;
  background: #f00;
`;

const ChartTabs = styled.div`
  flex: none;
  height: 22px;
  display: flex;
  align-items: flex-start;
  padding: 1px 0 0 5px;
  border-top: 1px solid #fff;
  border-bottom: 1px solid #fff;
  box-shadow: inset 0 1px 0 #000;
`;

const TabScroll = styled.div`
  flex: 1;
  display: flex;
  justify-content: flex-end;
  gap: 15px;
  padding: 6px 8px 0 0;
`;

///////

const StatusBar = styled.footer`
  flex: none;
  height: 23px;
  display: flex;
  align-items: center;
  border-bottom: 1px solid #fff;
`;

const Help = styled.div`
  flex: 1;
  padding: 2px 0 0 2px;
`;

const Cell = styled.div`
  width: ${(props) => props.$w}px;
  height: 18px;
  padding: 2px 0 0 4px;
  display: flex;
  align-items: center;
  gap: 3px;
  border-left: 1px solid #848284;
  box-shadow: inset 1px 0 0 #fff;
`;

const TaskBar = styled.footer`
  flex: none;
  height: 43px;
  display: flex;
  align-items: center;
  padding: 0 2px;
`;

const StartButton = styled.button`
  ${raised}
  width: 51px;
  height: 38px;
  display: flex;
  justify-content: center;
  align-items: center;
  font-weight: bold;
`;

const TaskDivider = styled.span`
  width: 3px;
  height: 34px;
  margin: 0 ${(props) => (props.$tight ? "2px" : "7px")};
  border-left: 1px solid #fff;
  border-right: 1px solid #848284;
`;

const TaskIcon = styled.button`
  width: 48px;
  height: 38px;
  display: flex;
  justify-content: center;
  align-items: center;
  margin-left: 1px;
  ${(props) =>
    props.$active &&
    css`
      background: #fff;
      border: 1px solid;
      border-color: #424142 #fff #fff #424142;
    `}
`;

const TaskSpace = styled.div`
  flex: 1;
`;

const Lang = styled.span`
  font-size: 12px;
  margin: 0 2px 0 6px;
`;

const Tray = styled.div`
  width: 118px;
  height: 38px;
  display: flex;
  justify-content: space-between;
  align-items: center;
  padding: 0 1px 0 6px;
  border: 1px solid;
  border-color: #848284 #fff #fff #848284;
`;

const Clock = styled.div`
  display: flex;
  flex-direction: column;
  align-items: center;
  line-height: 16px;
`;
